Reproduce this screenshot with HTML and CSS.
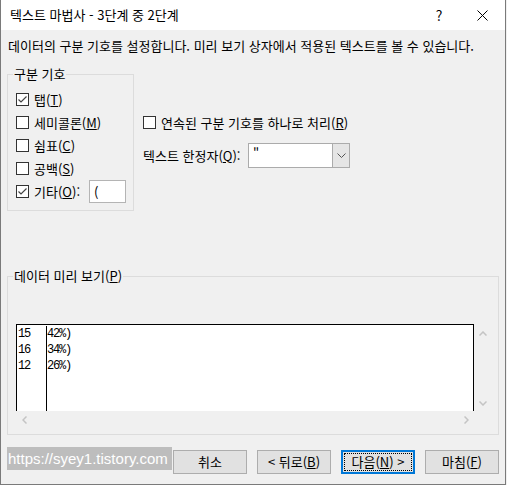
FILE: index.html
```html
<!DOCTYPE html>
<html lang="ko">
<head>
  <meta charset="UTF-8">
  <title>텍스트 마법사</title>
  <link rel="stylesheet" href="styles.css">
</head>
<body>

  <div class="window">
    <div class="titlebar">
      <span class="title">텍스트 마법사 - 3단계 중 2단계</span>
      <span class="tb-btn help">?</span>
      <span class="tb-btn close">
        <svg width="11" height="11" viewBox="0 0 11 11"><path d="M0.5 0.5 L10.5 10.5 M10.5 0.5 L0.5 10.5" stroke="#000" stroke-width="1"/></svg>
      </span>
    </div>

    <div class="body">
      <p class="desc">데이터의 구분 기호를 설정합니다. 미리 보기 상자에서 적용된 텍스트를 볼 수 있습니다.</p>

      <div class="top">
        <!-- 구분 기호 -->
        <div class="group delims">
          <div class="group-title">구분 기호</div>
          <div class="checks">
            <div class="check"><span class="box"><svg width="11" height="11" viewBox="0 0 11 11"><path d="M1.5 5.5 L4 8 L9.5 2.5" fill="none" stroke="#444" stroke-width="1.2"/></svg></span><span>탭(<u>T</u>)</span></div>
            <div class="check"><span class="box"></span><span>세미콜론(<u>M</u>)</span></div>
            <div class="check"><span class="box"></span><span>쉼표(<u>C</u>)</span></div>
            <div class="check"><span class="box"></span><span>공백(<u>S</u>)</span></div>
            <div class="check"><span class="box"><svg width="11" height="11" viewBox="0 0 11 11"><path d="M1.5 5.5 L4 8 L9.5 2.5" fill="none" stroke="#444" stroke-width="1.2"/></svg></span><span>기타(<u>O</u>):</span><span class="other-input">(</span></div>
          </div>
        </div>

        <div class="options">
          <div class="check"><span class="box"></span><span>연속된 구분 기호를 하나로 처리(<u>R</u>)</span></div>
          <div class="qualifier">
            <span class="q-label">텍스트 한정자(<u>Q</u>):</span>
            <div class="combo">
              <span class="combo-val">"</span>
              <span class="combo-btn">
                <svg width="9" height="5" viewBox="0 0 9 5"><path d="M0.5 0.5 L4.5 4.5 L8.5 0.5" fill="none" stroke="#555" stroke-width="1"/></svg>
              </span>
            </div>
          </div>
        </div>
      </div>

      <!-- 데이터 미리 보기 -->
      <div class="group preview">
        <div class="group-title">데이터 미리 보기(<u>P</u>)</div>
        <div class="scrollview">
          <div class="sheet">
            <div class="col col1">
              <div>15</div>
              <div>16</div>
              <div>12</div>
            </div>
            <div class="col col2">
              <div>42%)</div>
              <div>34%)</div>
              <div>26%)</div>
            </div>
          </div>
          <div class="vbar">
            <svg width="8" height="5" viewBox="0 0 8 5"><path d="M0.5 4.5 L4 1 L7.5 4.5" fill="none" stroke="#c4c4c4" stroke-width="1.5"/></svg>
            <svg width="8" height="5" viewBox="0 0 8 5"><path d="M0.5 0.5 L4 4 L7.5 0.5" fill="none" stroke="#c4c4c4" stroke-width="1.5"/></svg>
          </div>
          <div class="hbar">
            <svg width="5" height="8" viewBox="0 0 5 8"><path d="M4.5 0.5 L1 4 L4.5 7.5" fill="none" stroke="#c4c4c4" stroke-width="1.5"/></svg>
            <svg width="5" height="8" viewBox="0 0 5 8"><path d="M0.5 0.5 L4 4 L0.5 7.5" fill="none" stroke="#c4c4c4" stroke-width="1.5"/></svg>
          </div>
          <div class="corner"></div>
        </div>
      </div>

      <div class="footer">
        <div class="watermark">https://syey1.tistory.com</div>
        <div class="buttons">
          <div class="btn">취소</div>
          <div class="btn">&lt; 뒤로(<u>B</u>)</div>
          <div class="btn default"><span class="focus">다음(<u>N</u>) &gt;</span></div>
          <div class="btn">마침(<u>F</u>)</div>
        </div>
      </div>
    </div>
  </div>

</body>
</html>
```

FILE: styles.css
```css
* {
  box-sizing: border-box;
}

body {
  margin: 0;
  background: #f0f0f0;
  font-family: "Noto Sans CJK KR", "Noto Sans", sans-serif;
  font-size: 13px;
  color: #000;
}

u {
  text-decoration: underline;
  text-underline-offset: 1px;
}

.window {
  width: 506px;
  height: 485px;
  background: #f0f0f0;
  border: 1px solid #7a7a7a;
  border-top: none;
  display: flex;
  flex-direction: column;
}

/* 제목 표시줄 */
.titlebar {
  height: 30px;
  background: #fff;
  display: flex;
  align-items: center;
  padding-left: 9px;
}

.title {
  flex: 1;
  line-height: 16px;
}

.tb-btn {
  width: 46px;
  height: 30px;
  display: flex;
  align-items: center;
  justify-content: center;
}

.help {
  font-size: 14px;
  padding-left: 4px;
}

.close {
  width: 45px;
}

/* 본문 */
.body {
  flex: 1;
  padding-left: 6px;
}

.desc {
  margin: 8px 0 0 1px;
  line-height: 16px;
}

.top {
  display: flex;
  align-items: flex-start;
  margin-top: 20px;
}

.group {
  border: 1px solid #dcdcdc;
}

.group-title {
  width: fit-content;
  margin: -9px 0 0 5px;
  padding: 0 1px;
  background: #f0f0f0;
  line-height: 16px;
}

.delims {
  width: 127px;
  height: 137px;
}

.checks {
  display: flex;
  flex-direction: column;
  padding: 6px 7px 0 8px;
}

.check {
  display: flex;
  align-items: center;
  gap: 5px;
  height: 23px;
  line-height: 16px;
  white-space: nowrap;
}

.box {
  width: 13px;
  height: 13px;
  flex: none;
  border: 1px solid #333;
  background: #fff;
  display: flex;
  align-items: center;
  justify-content: center;
}

.other-input {
  width: 37px;
  height: 23px;
  margin-left: auto;
  border: 1px solid #b4b4b4;
  background: #fff;
  padding-left: 4px;
  line-height: 21px;
}

.options {
  margin-left: 9px;
}

.options .check {
  margin-top: 37px;
}

.qualifier {
  display: flex;
  align-items: center;
  margin-top: 9px;
}

.q-label {
  width: 105px;
  flex: none;
  line-height: 16px;
}

.combo {
  width: 102px;
  height: 25px;
  display: flex;
  border: 1px solid #ababab;
  background: #fff;
}

.combo-val {
  flex: 1;
  padding-left: 4px;
  line-height: 20px;
}

.combo-btn {
  width: 17px;
  background: #e5e5e5;
  border-left: 1px solid #ababab;
  display: flex;
  align-items: center;
  justify-content: center;
}

/* 미리 보기 */
.preview {
  width: 492px;
  height: 159px;
  margin-top: 65px;
}

.scrollview {
  display: grid;
  grid-template-columns: 458px 17px;
  grid-template-rows: 87px 17px;
  margin: 40px 0 0 8px;
}

.sheet {
  display: flex;
  background: #fff;
  border: 1px solid #000;
  border-bottom: none;
  font-family: "Liberation Mono", "DejaVu Sans Mono", monospace;
  font-size: 12px;
  letter-spacing: -1.2px;
  line-height: 16px;
  padding-top: 1px;
}

.col1 {
  width: 30px;
  padding-left: 1px;
  border-right: 1px solid #000;
}

.col2 {
  flex: 1;
}

.vbar {
  display: flex;
  flex-direction: column;
  align-items: center;
  justify-content: space-between;
  padding: 7px 0 5px 1px;
}

.hbar {
  display: flex;
  align-items: center;
  justify-content: space-between;
  padding: 0 5px 0 6px;
}

/* 하단 */
.footer {
  display: flex;
  align-items: flex-start;
  margin-top: 12px;
}

.watermark {
  width: 165px;
  height: 23px;
  background: #bdbdbd;
  color: #fff;
  font-family: "Liberation Sans", Arial, sans-serif;
  font-size: 15px;
  line-height: 23px;
  padding-left: 1px;
  white-space: nowrap;
}

.buttons {
  display: flex;
  gap: 10px;
  margin: 3px 0 0 1px;
}

.btn {
  width: 74px;
  height: 24px;
  background: #e1e1e1;
  border: 1px solid #adadad;
  display: flex;
  align-items: center;
  justify-content: center;
  line-height: 16px;
  white-space: nowrap;
}

.btn.default {
  border: 2px solid #0078d7;
  padding: 1px;
}

.focus {
  width: 100%;
  height: 100%;
  border: 1px dotted #000;
  display: flex;
  align-items: center;
  justify-content: center;
}
```
